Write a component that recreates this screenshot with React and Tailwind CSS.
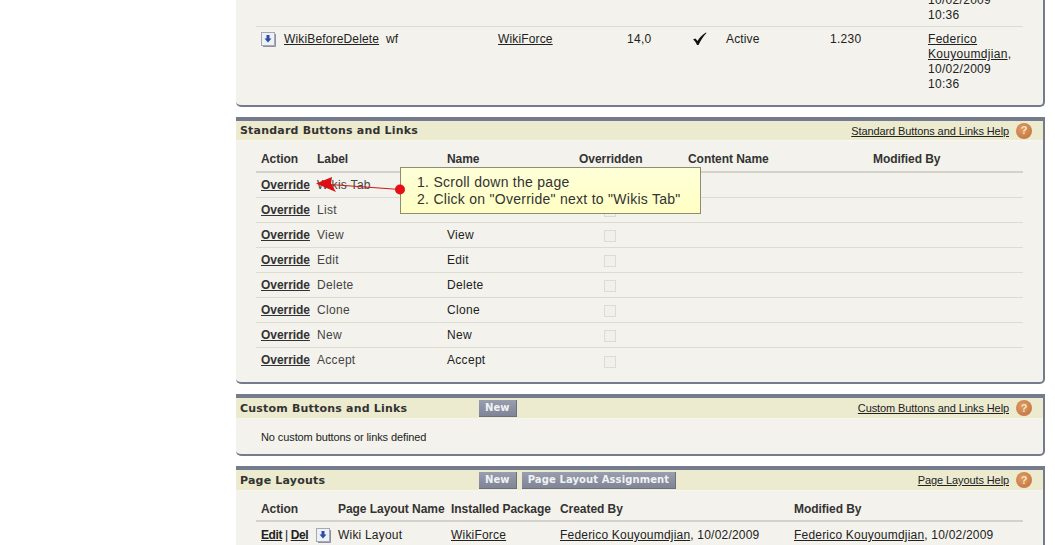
const PANEL_BORDER = "border-r-2 border-b-2 border-t-4 border-[#747b8d] rounded-b-[5px] bg-[#f3f2ec]";

function Help({ label }) {
  return (
    <div className="ml-auto flex items-center pr-[11px]">
      <a className="pt-[1px] text-[11px] text-[#222] underline tracking-[-0.1px]">{label}</a>
      <span className="ml-[7px] w-4 h-4 rounded-full bg-[radial-gradient(circle_at_40%_35%,#e09a62,#bd6f3c)] text-[#f5e6c8] text-[11px] font-bold flex items-center justify-center">?</span>
    </div>
  );
}

function PanelHeader({ title, help, h, children }) {
  return (
    <div className={`${h} flex items-center bg-[#ecebd0] border-b border-[#f7f7ef] pl-[4px]`}>
      <div className="w-[239px] shrink-0 font-['DejaVu_Sans'] font-bold text-[11px] text-[#333] tracking-[0.2px]">{title}</div>
      <div className="flex gap-[5px]">{children}</div>
      <Help label={help} />
    </div>
  );
}

function Btn({ children }) {
  return (
    <span className="h-[17px] px-[6px] flex items-center bg-[linear-gradient(#989eae,#7f8596)] border-b border-r border-[#6b7080] font-['DejaVu_Sans'] font-bold text-[10px] text-[#f2f2f2] tracking-[0.1px]">
      {children}
    </span>
  );
}

function PackageIcon() {
  return (
    <svg width="15" height="15" viewBox="0 0 15 15" className="shrink-0">
      <rect x="0.5" y="0.5" width="13" height="13" fill="#eef1f8" stroke="#a5a9b5" />
      <path d="M14.500 2v12.500H2" fill="none" stroke="#8f929c" />
      <path d="M5.500 3h3v3.500h2L7 10.500l-3.500-4h2z" fill="#2a4fa0" />
    </svg>
  );
}

function HeaderCell({ w, children }) {
  return <div className={`${w} shrink-0 font-bold text-[#333] tracking-[-0.05px]`}>{children}</div>;
}

function OverrideRow({ name, last }) {
  return (
    <div className={`h-[25px] ml-[20px] mr-[20px] pl-[5px] flex items-center text-[12px] text-[#444] ${last ? "" : "border-b border-[#dcdcd0]"}`}>
      <a className="w-[56px] shrink-0 font-bold underline text-[#333] tracking-[-0.05px]">Override</a>
      <span className="w-[130px] shrink-0 tracking-[0.3px]">{name}</span>
      <span className="w-[132px] shrink-0 text-[#222] tracking-[0.3px]">{name}</span>
      <span className="ml-[25px] w-3 h-3 border border-[#dddcd4] bg-[#f1f0ea] mt-[2px]" />
    </div>
  );
}

export default function App() {
  const rows = ["Wikis Tab", "List", "View", "Edit", "Delete", "Clone", "New", "Accept"];

  return (
    <div className="relative w-[1055px] h-[545px] overflow-hidden bg-white font-['Liberation_Sans',Arial,sans-serif] text-[12px] leading-[15px] pl-[236px]">
      <div className="w-[809px] flex flex-col">
        {/* top panel, scrolled off */}
        <div className="h-[107px] border-r-2 border-b-2 border-[#747b8d] rounded-b-[5px] bg-[#f3f2ec] overflow-hidden">
          <div className="h-[27px] ml-[20px] mr-[20px] border-b border-[#dcdcd0] relative">
            <div className="absolute left-[672px] bottom-[3px] tracking-[0.3px] text-[#222]">10/02/2009<br />10:36</div>
          </div>
          <div className="ml-[20px] mr-[20px] pt-[5px] flex text-[#222] tracking-[0.15px]">
            <div className="w-[28px] pl-[5px] shrink-0"><PackageIcon /></div>
            <a className="w-[102px] shrink-0 underline">WikiBeforeDelete</a>
            <span className="w-[112px] shrink-0">wf</span>
            <a className="w-[129px] shrink-0 underline">WikiForce</a>
            <span className="w-[65px] shrink-0 tracking-[0.3px]">14,0</span>
            <span className="w-[34px] shrink-0">
              <svg width="15" height="14" viewBox="0 0 15 14"><path d="M1 7.500 L3.500 6.500 L5.500 9 C7.500 5.500 10.500 2.500 14 0.500 L14.500 1 C11.500 4 8.500 8.500 6.500 13 L5 13 C4 10.500 2.800 8.800 1 7.500z" fill="#111" /></svg>
            </span>
            <span className="w-[104px] shrink-0">Active</span>
            <span className="w-[98px] shrink-0 tracking-[0.3px]">1.230</span>
            <div className="w-[90px] shrink-0 tracking-[0.3px]">
              <a className="underline">Federico Kouyoumdjian</a>,<br />10/02/2009<br />10:36
            </div>
          </div>
        </div>

        {/* standard buttons */}
        <div className={`mt-[10px] h-[267px] ${PANEL_BORDER}`}>
          <PanelHeader title="Standard Buttons and Links" help="Standard Buttons and Links Help" h="h-[20px]" />
          <div className="h-[32px] ml-[20px] mr-[20px] pl-[5px] flex items-center border-b-2 border-[#d4d3cb] pt-[7px]">
            <HeaderCell w="w-[56px]">Action</HeaderCell>
            <HeaderCell w="w-[130px]">Label</HeaderCell>
            <HeaderCell w="w-[132px]">Name</HeaderCell>
            <HeaderCell w="w-[109px]">Overridden</HeaderCell>
            <HeaderCell w="w-[185px]">Content Name</HeaderCell>
            <HeaderCell w="w-[100px]">Modified By</HeaderCell>
          </div>
          {rows.map((r, i) => (
            <OverrideRow key={r} name={r} last={i === rows.length - 1} />
          ))}
        </div>

        {/* custom buttons */}
        <div className={`mt-[10px] h-[62px] ${PANEL_BORDER}`}>
          <PanelHeader title="Custom Buttons and Links" help="Custom Buttons and Links Help" h="h-[21px]">
            <Btn>New</Btn>
          </PanelHeader>
          <div className="pl-[25px] pt-[11px] text-[11px] text-[#222] tracking-[-0.1px]">No custom buttons or links defined</div>
        </div>

        {/* page layouts */}
        <div className={`mt-[10px] h-[100px] ${PANEL_BORDER}`}>
          <PanelHeader title="Page Layouts" help="Page Layouts Help" h="h-[21px]">
            <Btn>New</Btn>
            <Btn>Page Layout Assignment</Btn>
          </PanelHeader>
          <div className="h-[31px] ml-[20px] mr-[20px] pl-[5px] flex items-center border-b-2 border-[#d4d3cb] pt-[7px]">
            <HeaderCell w="w-[77px]">Action</HeaderCell>
            <HeaderCell w="w-[113px]">Page Layout Name</HeaderCell>
            <HeaderCell w="w-[109px]">Installed Package</HeaderCell>
            <HeaderCell w="w-[234px]">Created By</HeaderCell>
            <HeaderCell w="w-[150px]">Modified By</HeaderCell>
          </div>
          <div className="h-[27px] ml-[20px] mr-[20px] pl-[5px] flex items-center text-[#222] tracking-[0.2px]">
            <div className="w-[55px] shrink-0 tracking-[-0.4px]"><a className="font-bold underline">Edit</a> | <a className="font-bold underline">Del</a></div>
            <div className="w-[22px] shrink-0"><PackageIcon /></div>
            <span className="w-[113px] shrink-0">Wiki Layout</span>
            <a className="w-[109px] shrink-0 underline">WikiForce</a>
            <span className="w-[234px] shrink-0"><a className="underline">Federico Kouyoumdjian</a>, 10/02/2009</span>
            <span className="shrink-0"><a className="underline">Federico Kouyoumdjian</a>, 10/02/2009</span>
          </div>
        </div>
      </div>

      {/* callout over the table */}
      <div className="absolute left-[400px] top-[167px] w-[301px] h-[47px] border border-[#8d8d70] bg-[linear-gradient(#ffffd8,#ffffc4)] pl-[16px] pt-[6px] text-[14px] leading-[17px] text-[#333] tracking-[0.27px]">
        <div>1. Scroll down the page</div>
        <div>2. Click on "Override" next to "Wikis Tab"</div>
      </div>
      <svg className="absolute left-[310px] top-[170px]" width="100" height="30" viewBox="0 0 100 30">
        <path d="M90 19.500 L20 14.500" stroke="#d01818" strokeWidth="1.200" fill="none" />
        <path d="M6 13.500 L22 7 L21 13.500 L26 22z" fill="#dd0f14" />
        <circle cx="90" cy="19.500" r="5" fill="#e60f14" />
      </svg>
    </div>
  );
}
